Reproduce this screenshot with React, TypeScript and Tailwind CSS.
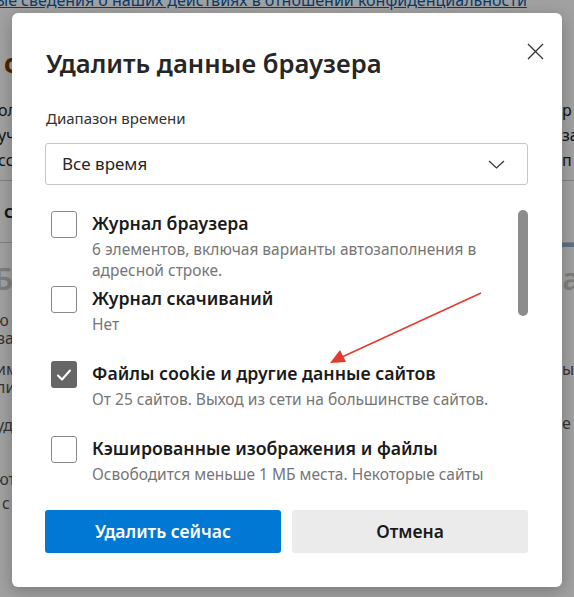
import React from "react";

const font = { fontFamily: '"Noto Sans", "Open Sans", sans-serif' };

function Checkbox({ checked }: { checked?: boolean }) {
  if (checked) {
    return (
      <div className="w-[26px] h-[27px] shrink-0 rounded-[3px] bg-[#666666] flex items-center justify-center">
        <svg width="16" height="14" viewBox="0 0 16 14" fill="none">
          <path d="M2 7.5 L6 11.5 L14 2.5" stroke="white" strokeWidth="2" strokeLinecap="round" strokeLinejoin="round" />
        </svg>
      </div>
    );
  }
  return <div className="w-[26px] h-[27px] shrink-0 rounded-[3px] border border-[#8a8a8a] bg-white" />;
}

function Item({ title, desc, checked }: { title: string; desc: string; checked?: boolean }) {
  return (
    <div className="h-[75px] shrink-0 flex gap-[15px] pl-[6px]">
      <Checkbox checked={checked} />
      <div className="flex flex-col">
        <div className="text-[17.7px] leading-[26px] font-semibold text-[#1b1b1b] -mt-[1px]">{title}</div>
        <div className="text-[15.5px] leading-[21px] text-[#767676] pr-[8px] mt-[3px]">{desc}</div>
      </div>
    </div>
  );
}

export default function App() {
  return (
    <div className="relative w-[574px] h-[597px] overflow-hidden bg-white" style={font}>
      {/* background page */}
      <div className="flex flex-col text-[#222]">
        <div className="-mt-[10px] h-[22px] text-[16px] leading-[20px] text-[#0a5fb4] underline whitespace-nowrap -ml-[4px]">
          ые сведения о наших действиях в отношении конфиденциальности
        </div>
        <div className="pt-[36px] text-[26px] leading-[30px] font-bold text-[#7a3a00] pl-[4px]">с</div>
        <div className="pt-[20px] flex justify-between text-[16px] leading-[25px]">
          <div className="flex flex-col -ml-[2px]"><span>ол</span><span>уч</span><span>сс</span></div>
          <div className="flex flex-col pl-[2px] w-[14px]"><span>р</span><span>за</span><span>п</span></div>
        </div>
        <div className="mt-[7px] h-[1px] bg-[#cccccc]" />
        <div className="h-[61px] flex items-center text-[18px] font-semibold pl-[4px]">с</div>
        <div className="h-[1px] bg-[#cccccc]" />
        <div className="h-[6px] flex justify-end"><div className="w-[14px] h-[4px] bg-[#8fb4d8]" /></div>
        <div className="flex justify-between text-[30px] leading-[60px] font-semibold text-[#c8c8c8]">
          <span className="-ml-[6px]">Б</span><span className="-mr-[6px]">а</span>
        </div>
        <div className="flex justify-between text-[16px] leading-[18px] text-[#555] mt-[2px]">
          <div className="flex flex-col -ml-[4px]">
            <span>ю</span><span>ва</span><span className="mt-[13px]">им</span><span>ли</span><span className="mt-[20px]">уд</span><span className="mt-[36px]">ют</span><span className="mt-[6px] pl-[6px]">с</span>
          </div>
          <div className="flex flex-col w-[12px]">
            <span className="mt-[49px]">ы</span><span className="mt-[36px]">е</span>
          </div>
        </div>
      </div>

      {/* backdrop */}
      <div className="absolute inset-0 bg-black/[0.37]" />

      {/* dialog */}
      <div className="absolute left-[12px] top-[13px] w-[550px] h-[574px] bg-white rounded-[6px] shadow-[0_4px_16px_rgba(0,0,0,0.25)] pl-[33px] pr-[34px] pt-[33px] flex flex-col">
        <button className="absolute right-[18px] top-[29px] w-[18px] h-[18px] flex items-center justify-center">
          <svg width="17" height="17" viewBox="0 0 17 17">
            <path d="M1 1 L16 16 M16 1 L1 16" stroke="#333" strokeWidth="1.3" />
          </svg>
        </button>
        <div className="h-[36px] text-[25.6px] leading-[36px] font-semibold text-[#262626] pl-[1px]">Удалить данные браузера</div>
        <div className="mt-[26px] h-[20px] text-[15px] leading-[20px] text-[#333] pl-[1px]">Диапазон времени</div>
        <div className="mt-[15px] h-[42px] shrink-0 rounded-[3px] border border-[#c6c6c6] flex items-center justify-between pl-[16px] pr-[22px]">
          <span className="text-[17px] text-[#262626]">Все время</span>
          <svg width="17" height="9" viewBox="0 0 17 9">
            <path d="M1 1 L8.5 8 L16 1" stroke="#333" strokeWidth="1.2" fill="none" />
          </svg>
        </div>
        <div className="mt-[15px] h-[285px] shrink-0 flex overflow-hidden">
          <div className="flex-1 pt-[11px] flex flex-col">
            <Item title="Журнал браузера" desc="6 элементов, включая варианты автозаполнения в адресной строке." />
            <Item title="Журнал скачиваний" desc="Нет" />
            <Item title="Файлы cookie и другие данные сайтов" desc="От 25 сайтов. Выход из сети на большинстве сайтов." checked />
            <Item title="Кэшированные изображения и файлы" desc="Освободится меньше 1 МБ места. Некоторые сайты могут загружаться медленнее при следующем посещении." />
          </div>
          <div className="w-[10px] pt-[10px]">
            <div className="h-[106px] rounded-full bg-[#8c8c8c]" />
          </div>
        </div>
        <div className="mt-[25px] flex gap-[11px]">
          <button className="flex-1 h-[43px] rounded-[3px] bg-[#0078d4] text-white text-[17.5px] font-semibold">Удалить сейчас</button>
          <button className="flex-1 h-[43px] rounded-[3px] bg-[#ebebeb] text-[#1b1b1b] text-[17.5px] font-semibold">Отмена</button>
        </div>
      </div>

      {/* annotation arrow */}
      <svg className="absolute inset-0 pointer-events-none" width="574" height="597" viewBox="0 0 574 597">
        <line x1="481" y1="293" x2="342" y2="357" stroke="#e53b2f" strokeWidth="1.6" />
        <path d="M330 363 L340 350 L346 362 Z" fill="#e53b2f" />
      </svg>
    </div>
  );
}
